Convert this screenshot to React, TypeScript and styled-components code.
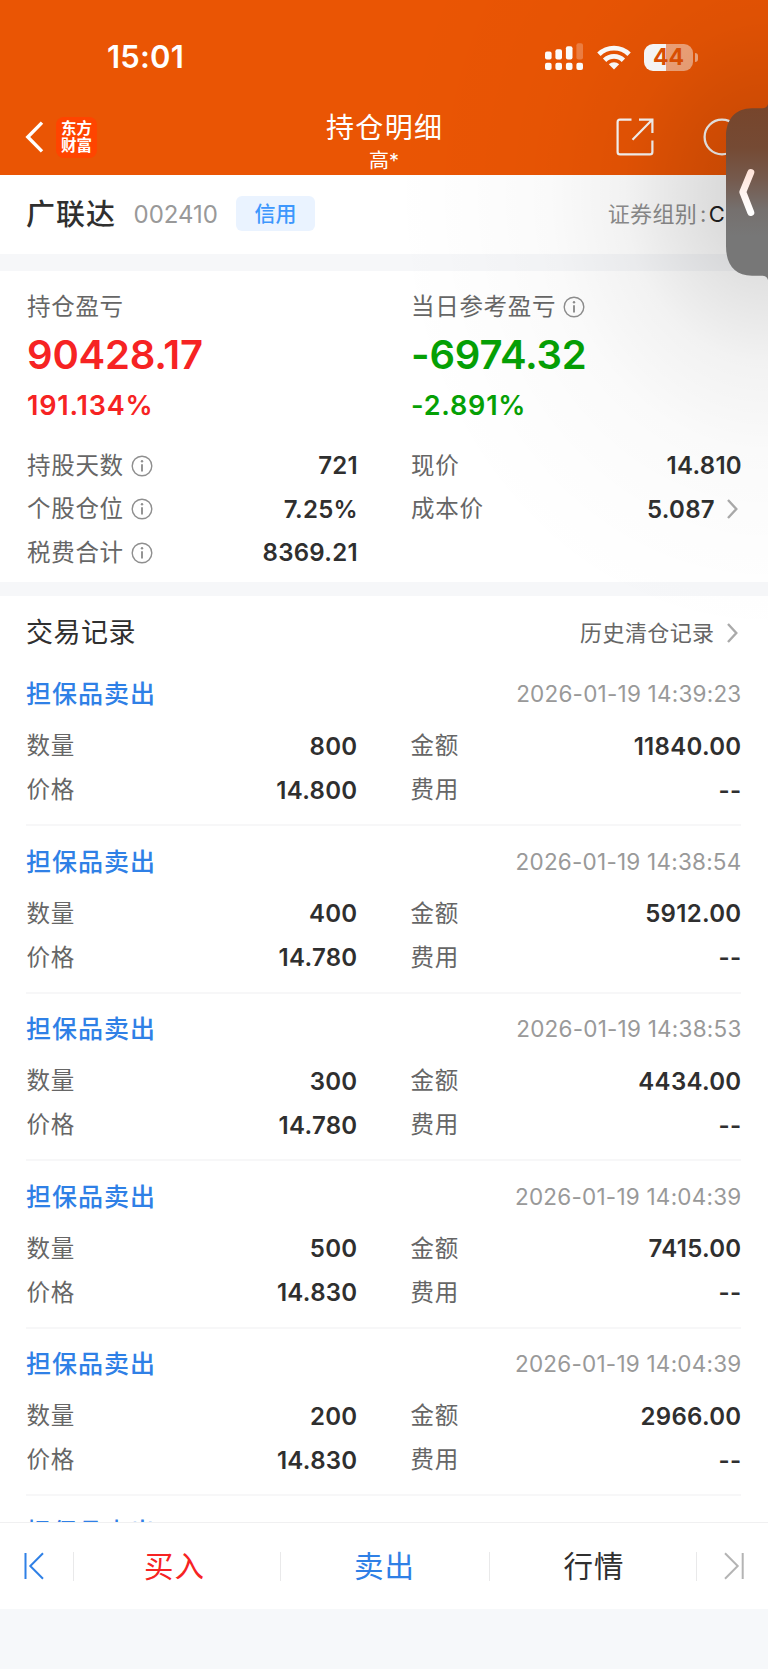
import React from "react";
import styled, { createGlobalStyle } from "styled-components";

const GlobalStyle = createGlobalStyle`
  * { box-sizing: border-box; }
  body {
    margin: 0;
    background: #fff;
    font-family: Inter, "Noto Sans CJK SC", sans-serif;
    color: #2f2f2f;
  }
`;

const Screen = styled.div`
  position: relative;
  display: flex;
  flex-direction: column;
  width: 768px;
  height: 1669px;
  overflow: hidden;
  background: #fff;
`;

const Header = styled.header`
  flex: none;
  height: 175px;
  background: #ea5504;
  color: #fff;
`;

const StatusBar = styled.div`
  display: flex;
  align-items: center;
  justify-content: space-between;
  height: 101px;
  padding: 13px 70px 0 107px;
`;

const Clock = styled.span`
  font-size: 31px;
  font-weight: 600;
  line-height: 36px;
  letter-spacing: 0.2px;
`;

const StatusIcons = styled.div`
  display: flex;
  align-items: center;
  gap: 13px;
`;

const Battery = styled.div`
  display: flex;
  align-items: center;
  gap: 2px;
`;

const BatteryBody = styled.div`
  width: 49px;
  height: 27px;
  border-radius: 9px;
  background: linear-gradient(90deg, #fff 44%, rgba(255, 255, 255, 0.47) 44%);
  color: #e35203;
  font-size: 23px;
  font-weight: 700;
  line-height: 27px;
  text-align: center;
`;

const BatteryCap = styled.div`
  width: 3px;
  height: 9px;
  border-radius: 0 4px 4px 0;
  background: rgba(255, 255, 255, 0.5);
`;

const NavBar = styled.div`
  display: grid;
  grid-template-columns: 1fr auto 1fr;
  height: 74px;
`;

const NavLeft = styled.div`
  display: flex;
  align-items: center;
  gap: 12px;
  height: 72px;
  padding-left: 25px;
`;

const NavRight = styled.div`
  display: flex;
  align-items: center;
  justify-content: flex-end;
  gap: 49px;
  height: 72px;
  padding-right: 27px;
`;

const AppLogo = styled.div`
  display: flex;
  flex-direction: column;
  align-items: center;
  justify-content: center;
  width: 41px;
  height: 41px;
  border-radius: 8px;
  background: #ff4400;
  font-size: 15.5px;
  font-weight: 700;
  line-height: 17px;
`;

const NavTitle = styled.div`
  padding-top: 7px;
  text-align: center;
`;

const Title = styled.div`
  font-size: 28px;
  line-height: 40px;
  letter-spacing: 1.3px;
  margin-right: -1.3px;
`;

const Account = styled.div`
  font-size: 20px;
  line-height: 26px;
`;

const StockBar = styled.section`
  flex: none;
  display: flex;
  align-items: center;
  height: 79px;
  padding: 0 43px 1px 26px;
`;

const StockName = styled.h1`
  margin: 0 17.5px 0 0;
  padding-top: 1px;
  font-size: 29px;
  font-weight: 500;
  line-height: 40px;
  letter-spacing: 1px;
`;

const StockCode = styled.span`
  font-size: 24px;
  letter-spacing: 0;
  color: #999;
`;

const CreditTag = styled.span`
  width: 79px;
  height: 35px;
  margin: -1px 0 0 18px;
  border-radius: 6px;
  background: #eaf3ff;
  color: #3d97fd;
  font-size: 21px;
  font-weight: 500;
  line-height: 35px;
  text-align: center;
`;

const GroupInfo = styled.span`
  display: flex;
  margin-left: auto;
  font-size: 22px;
  line-height: 32px;
  letter-spacing: 0.3px;
  color: #8f8f8f;
`;

const Colon = styled.span`
  margin: 0 2px 0 3px;
`;

const GroupValue = styled.span`
  color: #222;
`;

const Spacer = styled.div<{ $height: number }>`
  flex: none;
  height: ${(p) => p.$height}px;
  background: #f6f7f9;
`;

const Summary = styled.section`
  flex: none;
  height: 311px;
  padding: 18px 27px 0;
`;

const Columns = styled.div`
  display: grid;
  grid-template-columns: 330px 330px;
  column-gap: 54px;
`;

const Label = styled.span`
  display: flex;
  align-items: center;
  gap: 7px;
  font-size: 23.5px;
  line-height: 36px;
  letter-spacing: 0.7px;
  color: #666;
`;

const ProfitBlock = styled.div<{ $color: string }>`
  height: 155px;
  color: ${(p) => p.$color};
`;

const Amount = styled.div`
  font-size: 40px;
  font-weight: 600;
  line-height: 60px;
  letter-spacing: -0.2px;
`;

const Percent = styled.div`
  font-size: 27px;
  font-weight: 600;
  line-height: 42px;
  letter-spacing: 0.8px;
`;

const Row = styled.div<{ $height: number }>`
  display: flex;
  align-items: center;
  justify-content: space-between;
  height: ${(p) => p.$height}px;
`;

const Value = styled.span<{ $inset?: number }>`
  display: flex;
  align-items: center;
  gap: 12px;
  margin-right: -1px;
  padding-right: ${(p) => p.$inset ?? 0}px;
  font-size: 24px;
  font-weight: 600;
  letter-spacing: 0.3px;
`;

const RecordsHeader = styled.div`
  flex: none;
  display: flex;
  align-items: center;
  justify-content: space-between;
  height: 62.5px;
  padding: 12px 27px 0 26px;
`;

const RecordsTitle = styled.h2`
  margin: 0;
  font-size: 27px;
  font-weight: 400;
  line-height: 40px;
  letter-spacing: 0.5px;
`;

const HistoryLink = styled.a`
  display: flex;
  align-items: center;
  gap: 12.5px;
  padding-right: 3px;
  font-size: 22px;
  line-height: 32px;
  letter-spacing: 0.4px;
  color: #666;
`;

const RecordList = styled.div`
  flex: 1;
  min-height: 0;
  overflow: hidden;
`;

const Record = styled.article`
  height: 167.5px;
  margin: 0 27px 0 26px;
  padding-top: 15.5px;
  border-bottom: 2px solid #f7f7f8;
`;

const RecordHead = styled.div`
  display: flex;
  align-items: center;
  justify-content: space-between;
  height: 40px;
  margin-bottom: 10px;
`;

const RecordType = styled.span`
  padding-bottom: 4px;
  font-size: 25px;
  font-weight: 500;
  letter-spacing: 1px;
  color: #2f80e6;
`;

const RecordTime = styled.time`
  margin-right: -0.5px;
  padding-bottom: 1px;
  font-size: 22.5px;
  letter-spacing: 0.22px;
  color: #999;
`;

const RecordBody = styled(Columns)`
  margin-left: 0.5px;
`;

const ActionBar = styled.nav`
  flex: none;
  display: grid;
  grid-template-columns: 73px 207px 209px 207px 72px;
  align-items: center;
  height: 87px;
  border-top: 1px solid #f0f0f1;
`;

const Action = styled.button<{ $color: string; $shift?: number }>`
  height: 29px;
  padding: 0;
  border: 0;
  border-left: 1px solid #e9e9ea;
  background: none;
  color: ${(p) => p.$color};
  font: inherit;
  font-size: 29.5px;
  line-height: 29px;
  letter-spacing: 1px;
  text-indent: ${(p) => p.$shift ?? 0}px;
`;

const PagerCell = styled.div<{ $last?: boolean }>`
  display: flex;
  align-items: center;
  height: 29px;
  padding-left: ${(p) => (p.$last ? 27 : 24)}px;
  border-left: ${(p) => (p.$last ? "1px solid #e9e9ea" : "0")};
`;

const BottomInset = styled.div`
  flex: none;
  height: 60px;
  background: #f6f8fa;
`;

const EdgeShade = styled.div`
  position: absolute;
  inset: 0 0 auto auto;
  width: 440px;
  height: 660px;
  background: radial-gradient(
    ellipse 380px 450px at 440px 192px,
    rgba(0, 0, 0, 0.18) 0%,
    rgba(0, 0, 0, 0.125) 17%,
    rgba(0, 0, 0, 0.052) 38%,
    rgba(0, 0, 0, 0.02) 58%,
    rgba(0, 0, 0, 0.007) 80%,
    rgba(0, 0, 0, 0) 100%
  );
  pointer-events: none;
`;

const EdgeHandle = styled.svg`
  position: absolute;
  top: 100px;
  right: 0;
`;

const InfoIcon = () => (
  <svg width="22" height="22" viewBox="0 0 22 22" fill="none" stroke="#8f8f8f">
    <circle cx="11" cy="11" r="9.8" strokeWidth="1.4" />
    <path d="M11 9.2v7.2" strokeWidth="1.9" />
    <circle cx="11" cy="6.3" r="1.2" fill="#8f8f8f" stroke="none" />
  </svg>
);

const ChevronRight = () => (
  <svg width="11" height="20" viewBox="0 0 11 20" fill="none" stroke="#aaa" strokeWidth="2.4">
    <path d="M1 1l8.300 9L1 19" />
  </svg>
);

const SignalIcon = () => (
  <svg width="39" height="28" viewBox="0 0 39 28" fill="#fff">
    <rect x="0" y="8.5" width="6.6" height="8" rx="2" />
    <rect x="10.4" y="6.3" width="6.6" height="10.2" rx="2" />
    <rect x="20.9" y="3.3" width="6.6" height="13.2" rx="2" />
    <rect x="31.4" y="0.3" width="6.6" height="16.2" rx="2" opacity="0.25" />
    <rect x="0" y="19.8" width="6.6" height="7.2" rx="2" />
    <rect x="10.4" y="19.8" width="6.6" height="7.2" rx="2" />
    <rect x="20.9" y="19.8" width="6.6" height="7.2" rx="2" />
    <rect x="31.4" y="19.8" width="6.6" height="7.2" rx="2" />
  </svg>
);

const WifiIcon = () => (
  <svg width="34" height="25" viewBox="0 0 34 25" fill="none" stroke="#fff" strokeWidth="4.8">
    <path d="M1.9 9.2a21.6 21.6 0 0 1 30.2 0" />
    <path d="M7.6 15.300a13.4 13.4 0 0 1 18.8 0" />
    <path d="M17 24.6l-5.2-5.3a7.4 7.4 0 0 1 10.4 0z" fill="#fff" stroke="none" />
  </svg>
);

const BackIcon = () => (
  <svg width="19" height="32" viewBox="0 0 19 32" fill="none" stroke="#fff" strokeWidth="3.4">
    <path d="M17 1.6L2.8 16 17 30.4" />
  </svg>
);

const ShareIcon = () => (
  <svg width="38" height="38" viewBox="0 0 38 38" fill="none" stroke="#fbf8f6" strokeWidth="2.2">
    <path d="M15.5 1.6H4a2.4 2.4 0 0 0-2.4 2.4v30A2.4 2.4 0 0 0 4 36.4h30a2.4 2.4 0 0 0 2.4-2.4V22.5" />
    <path d="M23 1.6h13.4V15M36.4 1.6L16.5 21.8" />
  </svg>
);

const RefreshRing = () => (
  <svg width="38" height="38" viewBox="0 0 38 38" fill="none" stroke="#fbf8f6" strokeWidth="2.3">
    <circle cx="19" cy="19" r="17.4" />
  </svg>
);

const FirstIcon = () => (
  <svg width="20" height="28" viewBox="0 0 20 28" fill="none" stroke="#2f80e6" strokeWidth="2">
    <path d="M1.5 1v26M19 1.3L6.3 14 19 26.7" />
  </svg>
);

const LastIcon = () => (
  <svg width="20" height="28" viewBox="0 0 20 28" fill="none" stroke="#b4b4b4" strokeWidth="2">
    <path d="M18.7 1v26M1 1.3L13.7 14 1 26.7" />
  </svg>
);

interface FieldProps {
  label: string;
  value: string;
  height: number;
  info?: boolean;
  link?: boolean;
}

const Field = ({ label, value, height, info, link }: FieldProps) => (
  <Row $height={height}>
    <Label>
      {label}
      {info && <InfoIcon />}
    </Label>
    <Value $inset={link ? 4 : 0}>
      {value}
      {link && <ChevronRight />}
    </Value>
  </Row>
);

const records = [
  { time: "2026-01-19 14:39:23", count: "800", price: "14.800", total: "11840.00" },
  { time: "2026-01-19 14:38:54", count: "400", price: "14.780", total: "5912.00" },
  { time: "2026-01-19 14:38:53", count: "300", price: "14.780", total: "4434.00" },
  { time: "2026-01-19 14:04:39", count: "500", price: "14.830", total: "7415.00" },
  { time: "2026-01-19 14:04:39", count: "200", price: "14.830", total: "2966.00" },
];

export default function App() {
  return (
    <>
      <GlobalStyle />
      <Screen>
        <Header>
          <StatusBar>
            <Clock>15:01</Clock>
            <StatusIcons>
              <SignalIcon />
              <WifiIcon />
              <Battery>
                <BatteryBody>44</BatteryBody>
                <BatteryCap />
              </Battery>
            </StatusIcons>
          </StatusBar>
          <NavBar>
            <NavLeft>
              <BackIcon />
              <AppLogo>
                <span>东方</span>
                <span>财富</span>
              </AppLogo>
            </NavLeft>
            <NavTitle>
              <Title>持仓明细</Title>
              <Account>高*</Account>
            </NavTitle>
            <NavRight>
              <ShareIcon />
              <RefreshRing />
            </NavRight>
          </NavBar>
        </Header>

        <StockBar>
          <StockName>广联达</StockName>
          <StockCode>002410</StockCode>
          <CreditTag>信用</CreditTag>
          <GroupInfo>
            证券组别<Colon>:</Colon>
            <GroupValue>C</GroupValue>
          </GroupInfo>
        </StockBar>
        <Spacer $height={17} />

        <Summary>
          <Columns>
            <ProfitBlock $color="#f62323">
              <Label>持仓盈亏</Label>
              <Amount>90428.17</Amount>
              <Percent>191.134%</Percent>
            </ProfitBlock>
            <ProfitBlock $color="#05a005">
              <Label>
                当日参考盈亏
                <InfoIcon />
              </Label>
              <Amount>-6974.32</Amount>
              <Percent>-2.891%</Percent>
            </ProfitBlock>
            <div>
              <Field label="持股天数" value="721" height={43.5} info />
              <Field label="个股仓位" value="7.25%" height={43.5} info />
              <Field label="税费合计" value="8369.21" height={43.5} info />
            </div>
            <div>
              <Field label="现价" value="14.810" height={43.5} />
              <Field label="成本价" value="5.087" height={43.5} link />
            </div>
          </Columns>
        </Summary>
        <Spacer $height={14} />

        <RecordsHeader>
          <RecordsTitle>交易记录</RecordsTitle>
          <HistoryLink>
            历史清仓记录
            <ChevronRight />
          </HistoryLink>
        </RecordsHeader>
        <RecordList>
          {records.map((r, i) => (
            <Record key={i}>
              <RecordHead>
                <RecordType>担保品卖出</RecordType>
                <RecordTime>{r.time}</RecordTime>
              </RecordHead>
              <RecordBody>
                <Field label="数量" value={r.count} height={44} />
                <Field label="金额" value={r.total} height={44} />
                <Field label="价格" value={r.price} height={44} />
                <Field label="费用" value="--" height={44} />
              </RecordBody>
            </Record>
          ))}
          <Record>
            <RecordHead>
              <RecordType>担保品卖出</RecordType>
            </RecordHead>
          </Record>
        </RecordList>

        <ActionBar>
          <PagerCell>
            <FirstIcon />
          </PagerCell>
          <Action $color="#f62323" $shift={-5}>买入</Action>
          <Action $color="#2f80e6" $shift={-1}>卖出</Action>
          <Action $color="#2f2f2f" $shift={2}>行情</Action>
          <PagerCell $last>
            <LastIcon />
          </PagerCell>
        </ActionBar>
        <BottomInset />

        <EdgeShade />
        <EdgeHandle width="42" height="184" viewBox="0 0 42 184">
          <defs>
            <linearGradient id="handleFill" x1="0" y1="0" x2="0" y2="1">
              <stop offset="0" stopColor="#77452b" />
              <stop offset="0.25" stopColor="#754a34" />
              <stop offset="0.42" stopColor="#75594c" />
              <stop offset="0.6" stopColor="#75706e" />
              <stop offset="0.75" stopColor="#777" />
              <stop offset="1" stopColor="#777" />
            </linearGradient>
            <linearGradient id="handleArrow" x1="0" y1="0" x2="0" y2="1">
              <stop offset="0" stopColor="#ffe4da" />
              <stop offset="0.6" stopColor="#fff6f3" />
              <stop offset="1" stopColor="#fff" />
            </linearGradient>
          </defs>
          <path
            d="M42 4C41 7 39.500 8.300 36 8.300H26C9 8.300 0 20 0 36V146C0 165 9 175.700 26 175.700H36C39.500 175.700 41 177 42 180Z"
            fill="url(#handleFill)"
          />
          <path
            d="M24.800 72.500L16.800 92L24.800 112.500"
            fill="none"
            stroke="url(#handleArrow)"
            strokeWidth="7"
            strokeLinecap="round"
            strokeLinejoin="round"
          />
        </EdgeHandle>
      </Screen>
    </>
  );
}
